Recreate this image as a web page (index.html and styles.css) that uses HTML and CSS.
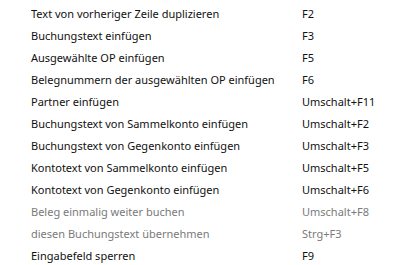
FILE: index.html
```html
<!DOCTYPE html>
<html lang="de">
<head>
    <meta charset="UTF-8">
    <title>Kontextmenü</title>
    <link rel="stylesheet" href="styles.css">
</head>
<body>
    <ul class="menu">
        <li class="menu-item"><span class="label">Text von vorheriger Zeile duplizieren</span><span class="shortcut">F2</span></li>
        <li class="menu-item"><span class="label">Buchungstext einfügen</span><span class="shortcut">F3</span></li>
        <li class="menu-item"><span class="label">Ausgewählte OP einfügen</span><span class="shortcut">F5</span></li>
        <li class="menu-item"><span class="label">Belegnummern der ausgewählten OP einfügen</span><span class="shortcut">F6</span></li>
        <li class="menu-item"><span class="label">Partner einfügen</span><span class="shortcut">Umschalt+F11</span></li>
        <li class="menu-item"><span class="label">Buchungstext von Sammelkonto einfügen</span><span class="shortcut">Umschalt+F2</span></li>
        <li class="menu-item"><span class="label">Buchungstext von Gegenkonto einfügen</span><span class="shortcut">Umschalt+F3</span></li>
        <li class="menu-item"><span class="label">Kontotext von Sammelkonto einfügen</span><span class="shortcut">Umschalt+F5</span></li>
        <li class="menu-item"><span class="label">Kontotext von Gegenkonto einfügen</span><span class="shortcut">Umschalt+F6</span></li>
        <li class="menu-item disabled"><span class="label">Beleg einmalig weiter buchen</span><span class="shortcut">Umschalt+F8</span></li>
        <li class="menu-item disabled"><span class="label">diesen Buchungstext übernehmen</span><span class="shortcut">Strg+F3</span></li>
        <li class="menu-item"><span class="label">Eingabefeld sperren</span><span class="shortcut">F9</span></li>
    </ul>
</body>
</html>
```

FILE: styles.css
```css
* {
    box-sizing: border-box;
    margin: 0;
    padding: 0;
}

body {
    background: #ffffff;
    font-family: "Segoe UI", "Noto Sans", sans-serif;
    font-size: 11px;
    color: #111111;
}

.menu {
    list-style: none;
    padding-top: 2px;
}

.menu-item {
    display: grid;
    grid-template-columns: 271px auto;
    align-items: center;
    height: 22px;
    padding-left: 31px;
    white-space: nowrap;
}

.menu-item.disabled {
    color: #7a7a7a;
}
```
